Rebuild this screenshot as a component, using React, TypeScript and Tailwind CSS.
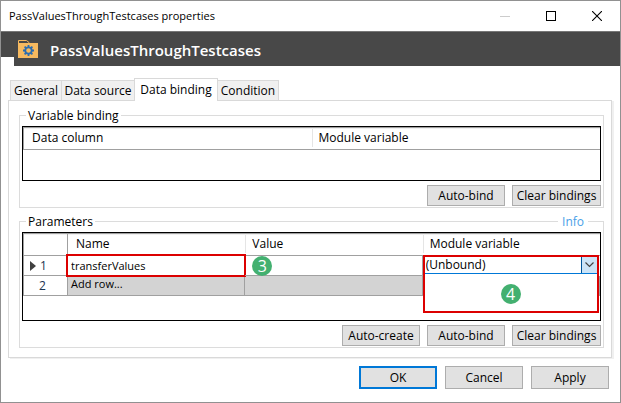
import type { ReactNode } from "react";

type ButtonProps = { children: ReactNode; className: string };

function DialogButton({ children, className }: ButtonProps) {
  return (
    <button type="button" className={`bg-[#e1e1e1] text-center whitespace-nowrap ${className}`}>
      {children}
    </button>
  );
}

const regular = "h-[21px] w-[78px] border border-[#adadad]";
const wide = "h-[21px] w-[89px] border border-[#adadad]";

function WindowControls() {
  return (
    <div className="flex items-center gap-9">
      <button type="button" aria-label="Minimize">
        <svg width="10" height="10" viewBox="0 0 10 10" shapeRendering="crispEdges">
          <rect x="0" y="5" width="10" height="1" fill="#cccccc" />
        </svg>
      </button>
      <button type="button" aria-label="Maximize">
        <svg width="10" height="10" viewBox="0 0 10 10" shapeRendering="crispEdges">
          <rect x="0.5" y="0.5" width="9" height="9" fill="none" stroke="#000" />
        </svg>
      </button>
      <button type="button" aria-label="Close">
        <svg width="10" height="10" viewBox="0 0 10 10">
          <path d="M0 0L10 10M10 0L0 10" fill="none" stroke="#000" strokeWidth="1.1" />
        </svg>
      </button>
    </div>
  );
}

function FolderIcon() {
  return (
    <svg width="20" height="18" viewBox="0 0 20 18" aria-hidden="true">
      <path d="M0 18V3H20V18Z" fill="#f6b95f" />
      <path d="M0.5 3V0.5H8.5L11.5 3" fill="#484848" stroke="#f6b95f" />
      <path
        d="M10.5 5V16M5 10.5H16M6.6 6.6L14.4 14.4M14.4 6.6L6.6 14.4"
        stroke="#2a6cb0"
        strokeWidth="1.8"
      />
      <circle cx="10.5" cy="10.5" r="3.2" fill="#f6b95f" stroke="#2a6cb0" strokeWidth="1.8" />
    </svg>
  );
}

function Marker({ value, className }: { value: number; className: string }) {
  return (
    <span
      className={`absolute flex size-5 items-center justify-center rounded-full bg-[#43b070] text-base leading-5 text-white ${className}`}
    >
      {value}
    </span>
  );
}

const tabs = [
  { label: "General", style: "h-5 w-[52px] border-x" },
  { label: "Data source", style: "h-5 w-[72px]" },
  { label: "Data binding", style: "" },
  { label: "Condition", style: "h-5 w-[61px] border-r" },
];

function Tabs() {
  return (
    <div role="tablist" className="flex items-end pl-0.5">
      {tabs.map((tab) =>
        tab.label === "Data binding" ? (
          <button
            key={tab.label}
            type="button"
            role="tab"
            aria-selected="true"
            className="relative z-10 -mb-px h-[23px] w-[84px] border-x border-t border-[#d9d9d9] bg-white pb-px whitespace-nowrap"
          >
            {tab.label}
          </button>
        ) : (
          <button
            key={tab.label}
            type="button"
            role="tab"
            aria-selected="false"
            className={`border-t border-[#d9d9d9] bg-[#f0f0f0] whitespace-nowrap ${tab.style}`}
          >
            {tab.label}
          </button>
        ),
      )}
    </div>
  );
}

const group = "relative min-w-0 border border-[#dcdcdc] px-0.5 pt-0.5 pb-px";
const legend = "ml-1 h-[17px] px-0.5 leading-[17px]";
const head = "h-[23px] border-b border-[#a0a0a0] py-0 text-left font-normal shadow-[inset_0_1px_0_#a0a0a0,inset_0_2px_0_#f0f0f0]";
const divided = "flex h-[18px] items-center border-l border-[#e5e5e5] pl-1.5";

function VariableBinding() {
  return (
    <fieldset className={group}>
      <legend className={legend}>Variable binding</legend>
      <div className="h-[55px] border border-black">
        <table className="w-full table-fixed border-separate border-spacing-0">
          <thead>
            <tr>
              <th scope="col" className={`${head} border-l pl-2`}>Data column</th>
              <th scope="col" className={`${head} pl-0`}>
                <span className={divided}>Module variable</span>
              </th>
            </tr>
          </thead>
        </table>
      </div>
      <div className="mt-1 flex justify-end gap-[7px]">
        <DialogButton className={regular}>Auto-bind</DialogButton>
        <DialogButton className={wide}>Clear bindings</DialogButton>
      </div>
    </fieldset>
  );
}

function ModuleVariablePicker() {
  return (
    <div className="absolute -top-px right-px left-0 h-[58px] border-2 border-[#dc0000] bg-white">
      <div className="relative flex h-[17px] border-b border-[#0078d7]">
        <select
          aria-label="Module variable"
          className="w-full appearance-none bg-white px-px leading-4 outline-none"
        >
          <option>(Unbound)</option>
        </select>
        <span className="pointer-events-none absolute inset-y-0 right-0 flex w-4 items-center justify-center border-l border-[#005499] bg-[#cce4f7]">
          <svg width="9" height="6" viewBox="0 0 9 6" aria-hidden="true">
            <path d="M0.5 0.5L4.5 4.5L8.5 0.5" fill="none" stroke="#444" strokeWidth="1.2" />
          </svg>
        </span>
      </div>
      <Marker value={4} className="top-[27px] left-[76px]" />
    </div>
  );
}

function Parameters() {
  const cell = "h-5 border-r border-b border-[#a0a0a0] p-0";
  return (
    <fieldset className={`${group} mt-[5px]`}>
      <legend className={legend}>Parameters</legend>
      <a href="#info" className="absolute -top-[17px] right-[15px] bg-white px-1 leading-[17px] text-[#4a9fe8]">
        Info
      </a>
      <div className="h-[89px] border border-black">
        <table className="w-full table-fixed border-separate border-spacing-0">
          <colgroup>
            <col className="w-[45px]" />
            <col />
            <col />
            <col />
          </colgroup>
          <thead>
            <tr>
              <td className={`${head} border-x`} />
              <th scope="col" className={`${head} pl-2`}>Name</th>
              <th scope="col" className={`${head} pl-0`}>
                <span className={divided}>Value</span>
              </th>
              <th scope="col" className={`${head} pl-0`}>
                <span className={divided}>Module variable</span>
              </th>
            </tr>
          </thead>
          <tbody>
            <tr>
              <th scope="row" className={`${cell} border-l font-normal`}>
                <span className="flex items-center gap-1 pl-1.5 text-[#1a3350]">
                  <svg width="6" height="10" viewBox="0 0 6 10" aria-hidden="true">
                    <path d="M0 0L6 5L0 10Z" fill="#404040" />
                  </svg>
                  1
                </span>
              </th>
              <td className={`${cell} relative`}>
                <input
                  aria-label="Name"
                  defaultValue="transferValues"
                  className="block h-[19px] w-full bg-white pl-[3px] text-[11px] outline-none"
                />
                <span className="pointer-events-none absolute -inset-0.5 border-2 border-[#dc0000]" />
              </td>
              <td className={`${cell} relative`}>
                <Marker value={3} className="top-0 left-[7px]" />
              </td>
              <td className="relative h-5 p-0">
                <ModuleVariablePicker />
              </td>
            </tr>
            <tr>
              <th scope="row" className={`${cell} border-l font-normal`}>
                <span className="flex pl-[15px] text-[#1a3350]">2</span>
              </th>
              <td className={`${cell} bg-[#d3d3d3] pl-[3px]`}>
                <span className="flex h-[19px] items-start text-[11px] leading-4">Add row...</span>
              </td>
              <td className={`${cell} bg-[#d3d3d3]`} />
              <td className={`${cell} bg-[#d3d3d3]`} />
            </tr>
          </tbody>
        </table>
      </div>
      <div className="mt-1 flex justify-end gap-[7px]">
        <DialogButton className={regular}>Auto-create</DialogButton>
        <DialogButton className={regular}>Auto-bind</DialogButton>
        <DialogButton className={wide}>Clear bindings</DialogButton>
      </div>
    </fieldset>
  );
}

export default function App() {
  return (
    <main className="border border-[#919191] bg-white font-['Open_Sans',sans-serif] text-xs text-black">
      <header className="flex h-[30px] items-center justify-between pr-[18px] pl-2">
        <span className="text-[11px]">PassValuesThroughTestcases properties</span>
        <WindowControls />
      </header>
      <div className="flex border-t border-[#777777]">
        <div className="h-[25px] w-[13px] bg-[#484848]" />
        <div className="flex h-[34px] flex-1 items-center gap-3 bg-[#484848] pl-1">
          <FolderIcon />
          <h1 className="pt-0.5 text-[15px] leading-5 font-semibold text-white">PassValuesThroughTestcases</h1>
        </div>
      </div>
      <div className="pt-3 pr-2 pl-[7px]">
        <Tabs />
        <div
          role="tabpanel"
          className="border border-[#d9d9d9] bg-white pt-1.5 pr-[7px] pb-[9px] pl-2.5 shadow-[2px_1px_0_#f0f0f0]"
        >
          <VariableBinding />
          <Parameters />
        </div>
      </div>
      <footer className="flex justify-end gap-2 pt-2 pr-[11px] pb-[13px]">
        <DialogButton className="h-[23px] w-[78px] border-2 border-[#0078d7]">OK</DialogButton>
        <DialogButton className="h-[23px] w-[78px] border border-[#adadad]">Cancel</DialogButton>
        <DialogButton className="h-[23px] w-[78px] border border-[#adadad]">Apply</DialogButton>
      </footer>
    </main>
  );
}
